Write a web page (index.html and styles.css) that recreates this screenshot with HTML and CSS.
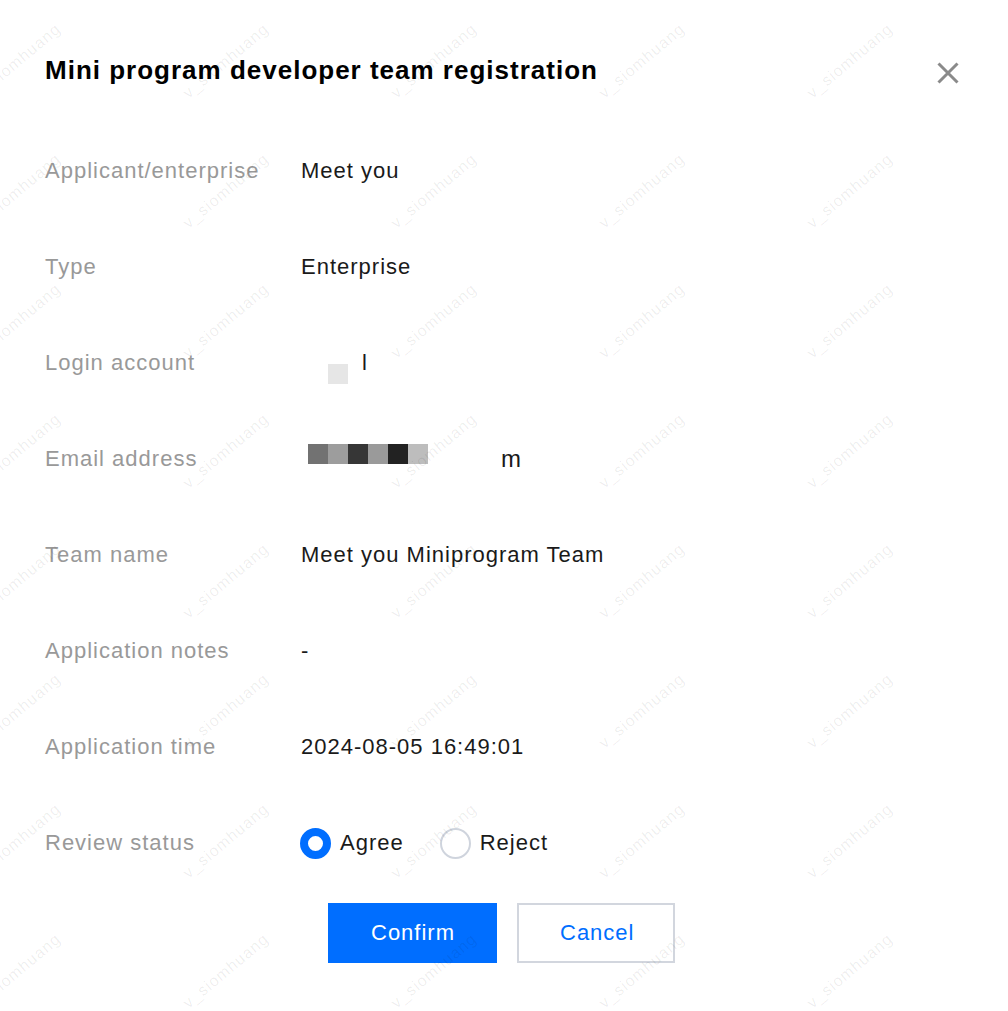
FILE: index.html
```html
<!DOCTYPE html>
<html lang="en">
<head>
<meta charset="utf-8">
<title>Mini program developer team registration</title>
<link rel="stylesheet" href="styles.css">
</head>
<body>
<div class="dialog">
  <div class="header">
    <h1 class="title">Mini program developer team registration</h1>
    <button class="close" aria-label="Close">
      <svg width="24" height="24" viewBox="0 0 24 24"><path d="M2.5 2.5L21.5 21.5M21.5 2.5L2.5 21.5" stroke="#8a8a8a" stroke-width="3" fill="none"/></svg>
    </button>
  </div>

  <div class="form">
    <div class="row"><div class="label">Applicant/enterprise</div><div class="value">Meet you</div></div>
    <div class="row"><div class="label">Type</div><div class="value">Enterprise</div></div>
    <div class="row"><div class="label">Login account</div><div class="value"><span class="blur-login"></span><span class="login-tail">l</span></div></div>
    <div class="row"><div class="label">Email address</div><div class="value"><span class="mosaic"><i class="m1"></i><i class="m2"></i><i class="m3"></i><i class="m4"></i><i class="m5"></i><i class="m6"></i></span><span class="email-tail">m</span></div></div>
    <div class="row"><div class="label">Team name</div><div class="value">Meet you Miniprogram Team</div></div>
    <div class="row"><div class="label">Application notes</div><div class="value">-</div></div>
    <div class="row"><div class="label">Application time</div><div class="value">2024-08-05 16:49:01</div></div>
    <div class="row"><div class="label">Review status</div>
      <div class="value radios">
        <label class="radio checked"><span class="dot"></span><span>Agree</span></label>
        <label class="radio"><span class="dot"></span><span>Reject</span></label>
      </div>
    </div>
  </div>

  <div class="actions">
    <button class="btn btn-primary">Confirm</button>
    <button class="btn btn-default">Cancel</button>
  </div>

  <div class="watermark" aria-hidden="true">
    <div class="wm-grid">
      <span>v_siomhuang</span><span>v_siomhuang</span><span>v_siomhuang</span><span>v_siomhuang</span><span>v_siomhuang</span>
      <span>v_siomhuang</span><span>v_siomhuang</span><span>v_siomhuang</span><span>v_siomhuang</span><span>v_siomhuang</span>
      <span>v_siomhuang</span><span>v_siomhuang</span><span>v_siomhuang</span><span>v_siomhuang</span><span>v_siomhuang</span>
      <span>v_siomhuang</span><span>v_siomhuang</span><span>v_siomhuang</span><span>v_siomhuang</span><span>v_siomhuang</span>
      <span>v_siomhuang</span><span>v_siomhuang</span><span>v_siomhuang</span><span>v_siomhuang</span><span>v_siomhuang</span>
      <span>v_siomhuang</span><span>v_siomhuang</span><span>v_siomhuang</span><span>v_siomhuang</span><span>v_siomhuang</span>
      <span>v_siomhuang</span><span>v_siomhuang</span><span>v_siomhuang</span><span>v_siomhuang</span><span>v_siomhuang</span>
      <span>v_siomhuang</span><span>v_siomhuang</span><span>v_siomhuang</span><span>v_siomhuang</span><span>v_siomhuang</span>
    </div>
  </div>
</div>
</body>
</html>
```

FILE: styles.css
```css
* { box-sizing: border-box; }

html, body {
  margin: 0;
  padding: 0;
  background: #fff;
}

body {
  width: 1008px;
  height: 1011px;
  overflow: hidden;
  font-family: "Liberation Sans", Arial, sans-serif;
}

.dialog {
  position: relative;
  width: 1008px;
  height: 1011px;
  padding: 52px 48px 0 45px;
  overflow: hidden;
}

.header {
  display: flex;
  justify-content: space-between;
  align-items: center;
  height: 36px;
}

.title {
  margin: 0;
  font-size: 26px;
  line-height: 36px;
  font-weight: 700;
  letter-spacing: 1px;
  color: #000;
}

.close {
  display: flex;
  margin: 6px 0 0 0;
  padding: 0;
  border: 0;
  background: none;
  width: 24px;
  height: 24px;
  cursor: pointer;
}

.form {
  margin-top: 35px;
}

.row {
  display: flex;
  align-items: center;
  height: 96px;
}

.label {
  width: 256px;
  flex: none;
  font-size: 22px;
  line-height: 30px;
  letter-spacing: 1px;
  color: #999;
}

.value {
  display: flex;
  align-items: center;
  font-size: 22px;
  line-height: 30px;
  letter-spacing: 1px;
  color: #1a1a1a;
}

.blur-login {
  width: 20px;
  height: 20px;
  margin: 22px 0 0 27px;
  background: #e6e6e6;
}

.login-tail {
  margin-left: 14px;
}

.mosaic {
  display: flex;
  margin: 0 0 10px 7px;
}

.mosaic i {
  display: block;
  width: 20px;
  height: 20px;
}

.mosaic .m1 { background: #727272; }
.mosaic .m2 { background: #9d9d9d; }
.mosaic .m3 { background: #363636; }
.mosaic .m4 { background: #9a9a9a; }
.mosaic .m5 { background: #222; }
.mosaic .m6 { background: #bdbdbd; }

.email-tail {
  margin-left: 73px;
  font-size: 24px;
}

.radios {
  gap: 36px;
  margin-left: -1px;
}

.radio {
  display: flex;
  align-items: center;
  gap: 9px;
}

.radio .dot {
  width: 31px;
  height: 31px;
  border-radius: 50%;
  border: 2px solid #cfd4dd;
  background: #fff;
}

.radio.checked .dot {
  border: 8.5px solid #006eff;
}

.actions {
  display: flex;
  justify-content: center;
  gap: 20px;
  margin-top: 12px;
  padding-right: 2px;
}

.btn {
  height: 60px;
  padding: 0 41px;
  font-family: "Liberation Sans", Arial, sans-serif;
  font-size: 22px;
  letter-spacing: 1px;
  border: 2px solid #006eff;
  background: #fff;
  cursor: pointer;
}

.btn-primary {
  width: 169px;
  background: #006eff;
  color: #fff;
}

.btn-default {
  width: 158px;
  border-color: #d2d6de;
  color: #006eff;
}

.watermark {
  position: absolute;
  inset: 0;
  overflow: hidden;
  pointer-events: none;
}

.wm-grid {
  position: absolute;
  left: -86px;
  top: -4px;
  display: grid;
  grid-template-columns: repeat(5, 208px);
  grid-auto-rows: 130px;
}

.wm-grid span {
  display: flex;
  align-items: center;
  justify-content: center;
  font-family: "Liberation Sans", Arial, sans-serif;
  font-size: 16px;
  letter-spacing: 1px;
  color: rgba(0, 0, 0, 0.07);
  transform: rotate(-40deg);
  white-space: nowrap;
}
```
